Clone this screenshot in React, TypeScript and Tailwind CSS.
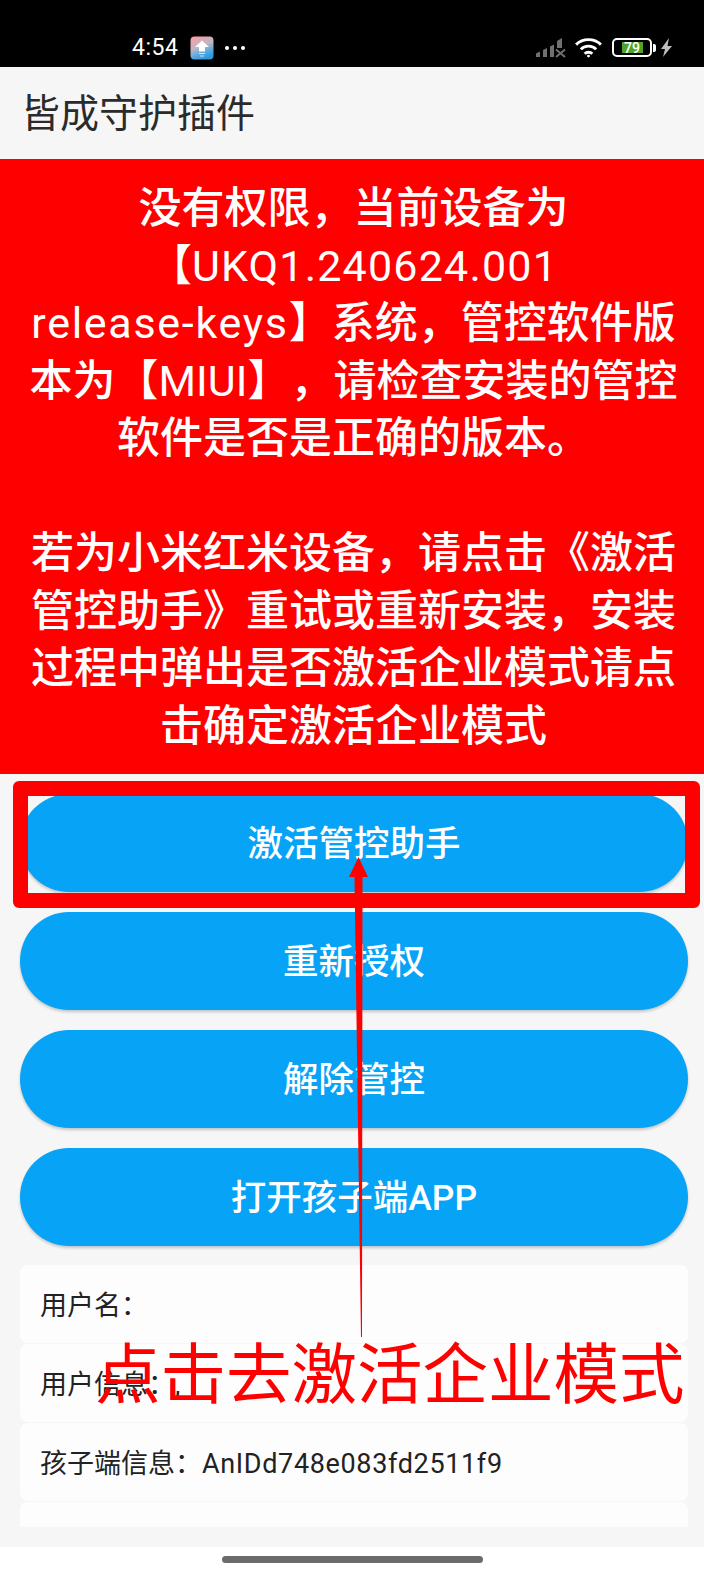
const cjk = "font-['Roboto','Noto_Sans_CJK_SC',sans-serif]";

function StatusBar() {
  return (
    <div className="flex h-[67px] items-center justify-between bg-black pt-[28px] pl-[132px] pr-[32px] text-white">
      <div className="flex items-center">
        <span className="text-[23px] leading-none tracking-[0.5px] font-['Roboto',sans-serif]">4:54</span>
        <svg width="24" height="24" viewBox="0 0 24 24" className="ml-[12px]">
          <defs>
            <linearGradient id="appIcon" x1="0.2" y1="0" x2="0.6" y2="1">
              <stop offset="0" stopColor="#fb9ea4" />
              <stop offset="0.45" stopColor="#bdb7c6" />
              <stop offset="0.75" stopColor="#58a8e0" />
              <stop offset="1" stopColor="#2a98dc" />
            </linearGradient>
          </defs>
          <rect x="0.5" y="0.5" width="23" height="23" rx="4" fill="url(#appIcon)" />
          <path d="M12 4.500 L19 11 H15 V15.500 H9 V11 H5 Z" fill="#fff" />
          <path d="M9 17.500h6M10 20h4" stroke="#fff" strokeWidth="1" opacity="0.7" />
        </svg>
        <div className="ml-[11px] flex gap-[4px]">
          <span className="h-[4px] w-[4px] rounded-full bg-white" />
          <span className="h-[4px] w-[4px] rounded-full bg-white" />
          <span className="h-[4px] w-[4px] rounded-full bg-white" />
        </div>
      </div>
      <div className="flex items-center">
        <svg width="30" height="20" viewBox="0 0 30 20" fill="#707070">
          <path d="M0 15.500L4 13.500V19H0Z" />
          <path d="M7 12L11 10V19H7Z" />
          <path d="M14 8.500L18 6.500V19H14Z" />
          <path d="M21 3L26 0V10H21Z" />
          <path d="M20 11.500l9 7.500M29 11.500l-9 7.500" stroke="#707070" strokeWidth="2" />
        </svg>
        <svg width="29" height="21" viewBox="0 0 30 22" fill="none" stroke="#fff" strokeWidth="3" className="ml-[8px]">
          <path d="M2 8C9 1 21 1 28 8" />
          <path d="M7 13C11 8.500 19 8.500 23 13" />
          <path d="M11 17.500C13 15.500 17 15.500 19 17.500" />
          <circle cx="15" cy="20" r="1.500" fill="#fff" stroke="none" />
        </svg>
        <div className="ml-[9px] flex h-[19px] w-[40px] items-center justify-center rounded-[5px] border-2 border-white">
          <div className="flex h-[11px] w-[21px] items-center justify-center bg-[#4fa32a] text-[14px] leading-none font-medium text-white font-['Roboto',sans-serif]">79</div>
        </div>
        <span className="ml-[1px] h-[8px] w-[3px] rounded-r-[2px] bg-white" />
        <svg width="11" height="19" viewBox="0 0 11 19" fill="#bdbdbd" className="ml-[5px]">
          <path d="M8 0L0 11h4L2 19l9-11H6.500z" />
        </svg>
      </div>
    </div>
  );
}

function Pill({ children }: { children: React.ReactNode }) {
  return (
    <button className="flex h-[98px] w-full items-center justify-center rounded-[49px] bg-[#06a3f7] pt-[3px] text-[35.500px] leading-none font-medium text-white shadow-[0_2px_3px_rgba(0,0,0,0.2)]">
      {children}
    </button>
  );
}

function Card({ children, className = "h-[78px]" }: { children?: React.ReactNode; className?: string }) {
  return (
    <div className={`flex w-full items-center rounded-[8px] bg-[#fdfdfd] px-[20px] pt-[4px] text-[27px] leading-none whitespace-pre text-[#222] ${className}`}>
      {children}
    </div>
  );
}

export default function App() {
  return (
    <div className={`relative flex h-[1572px] w-[704px] flex-col overflow-hidden bg-white [text-spacing-trim:space-all] ${cjk}`}>
      <StatusBar />
      <div className="flex h-[92px] items-center bg-[#f6f6f6] pl-[21px] pt-[2px] text-[39px] leading-none text-[#2b2b2b]">
        皆成守护插件
      </div>
      <div className="flex h-[615px] items-start justify-center bg-[#ff0000] pl-[3px] pt-[21px] text-center text-[43px] leading-[57.500px] font-medium text-white">
        <p>
          没有权限，当前设备为
          <br />
          【<span className="font-normal tracking-[1.200px]">UKQ1.240624.001</span>
          <br />
          <span className="font-normal tracking-[1.700px]">release-keys</span>】系统，管控软件版
          <br />
          本为【<span className="font-normal">MIUI</span>】，请检查安装的管控
          <br />
          软件是否是正确的版本。
          <br />
          <br />
          若为小米红米设备，请点击《激活
          <br />
          管控助手》重试或重新安装，安装
          <br />
          过程中弹出是否激活企业模式请点
          <br />
          击确定激活企业模式
        </p>
      </div>
      <div className="flex flex-1 flex-col bg-[#f6f6f6] pl-[20px] pr-[16px] pt-[20px]">
        <div className="flex flex-col gap-[20px]">
          <Pill>激活管控助手</Pill>
          <Pill>重新授权</Pill>
          <Pill>解除管控</Pill>
          <Pill>打开孩子端APP</Pill>
        </div>
        <div className="mt-[19px] flex flex-col gap-[1px]">
          <Card>用户名：</Card>
          <Card>用户信息：,</Card>
          <Card>
            孩子端信息：<span className="tracking-[0.650px]">AnIDd748e083fd2511f9</span>
          </Card>
          <Card className="h-[25px] rounded-b-none" />
        </div>
      </div>
      <div className="flex h-[25px] items-center justify-center bg-white">
        <span className="h-[7px] w-[261px] rounded-full bg-[#6b6b6b]" />
      </div>

      {/* Red annotations drawn over the screenshot */}
      <div className="absolute left-[13px] top-[781px] h-[127px] w-[687px] rounded-[6px] border-[15px] border-[#ff0000]" />
      <svg className="absolute left-[340px] top-[850px]" width="40" height="495" viewBox="340 850 40 495" fill="#ff0000">
        <path d="M358.500 857L368 877H362.500L362 1337H361L354.500 877H349Z" />
      </svg>
      <div className="absolute left-[95px] top-[1336px] whitespace-nowrap text-[65.500px] leading-[80px] text-[#ff0000]">
        点击去激活企业模式
      </div>
    </div>
  );
}
